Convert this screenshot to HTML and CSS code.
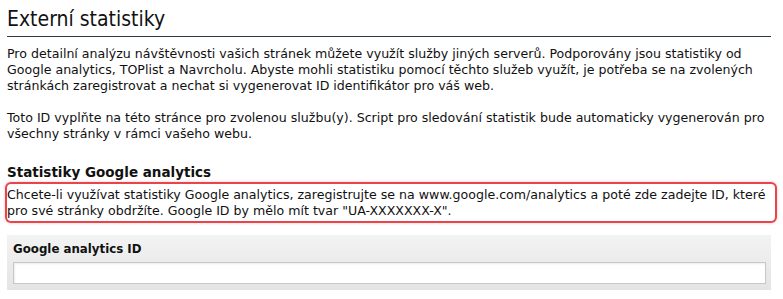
FILE: index.html
```html
<!DOCTYPE html>
<html lang="cs">
<head>
<meta charset="utf-8">
<title>Externí statistiky</title>
<link rel="stylesheet" href="styles.css">
</head>
<body>
<div class="page">
  <h1 class="title">Externí statistiky</h1>
  <p class="text first">Pro detailní analýzu návštěvnosti vašich stránek můžete využít služby jiných serverů. Podporovány jsou statistiky od Google analytics, TOPlist a Navrcholu. Abyste mohli statistiku pomocí těchto služeb využít, je potřeba se na zvolených stránkách zaregistrovat a nechat si vygenerovat ID identifikátor pro váš web.</p>
  <p class="text">Toto ID vyplňte na této stránce pro zvolenou službu(y). Script pro sledování statistik bude automaticky vygenerován pro všechny stránky v rámci vašeho webu.</p>
  <h2 class="subtitle">Statistiky Google analytics</h2>
  <p class="text notice">Chcete-li využívat statistiky Google analytics, zaregistrujte se na www.google.com/analytics a poté zde zadejte ID, které pro své stránky obdržíte. Google ID by mělo mít tvar "UA-XXXXXXX-X".</p>
  <div class="panel">
    <label class="label" for="ga">Google analytics ID</label>
    <input class="input" id="ga" type="text">
  </div>
</div>
</body>
</html>
```
FILE: styles.css
```css
html, body {
  margin: 0;
  padding: 0;
  background: #fff;
}
.page {
  padding: 0 12px 0 7px;
  font-family: "DejaVu Sans", Verdana, sans-serif;
  color: #111;
}
.title {
  margin: 0;
  padding: 7px 0 5px;
  font-family: "DejaVu Sans Condensed", "DejaVu Sans", sans-serif;
  font-stretch: condensed;
  font-size: 21px;
  line-height: 24px;
  font-weight: normal;
  border-bottom: 1px solid #2d3a45;
}
.text {
  margin: 0;
  font-size: 12.6px;
  line-height: 16px;
}
.first {
  margin-top: 9px;
}
.text + .text {
  margin-top: 16px;
}
.subtitle {
  margin: 21px 0 0;
  font-size: 13.5px;
  line-height: 18px;
  font-weight: bold;
}
.text.notice {
  margin: 3px -4px 0 0;
  padding: 3px 4px 2px 0;
  border-radius: 4px;
  box-shadow: 0 0 0 2px #e8444c, 0 0 3px 2px rgba(232, 68, 76, 0.35);
}
.panel {
  margin-top: 14px;
  padding: 6px 5px 6px 6px;
  background: linear-gradient(#f3f3f3, #e4e4e4);
  display: flex;
  flex-direction: column;
  gap: 5px;
}
.label {
  font-size: 11.8px;
  line-height: 16px;
  font-weight: bold;
}
.input {
  height: 22px;
  box-sizing: border-box;
  margin: 0;
  border: 1px solid #c8c8c8;
  box-shadow: inset 1px 1px 2px rgba(0,0,0,0.08);
  background: #fff;
}
```
